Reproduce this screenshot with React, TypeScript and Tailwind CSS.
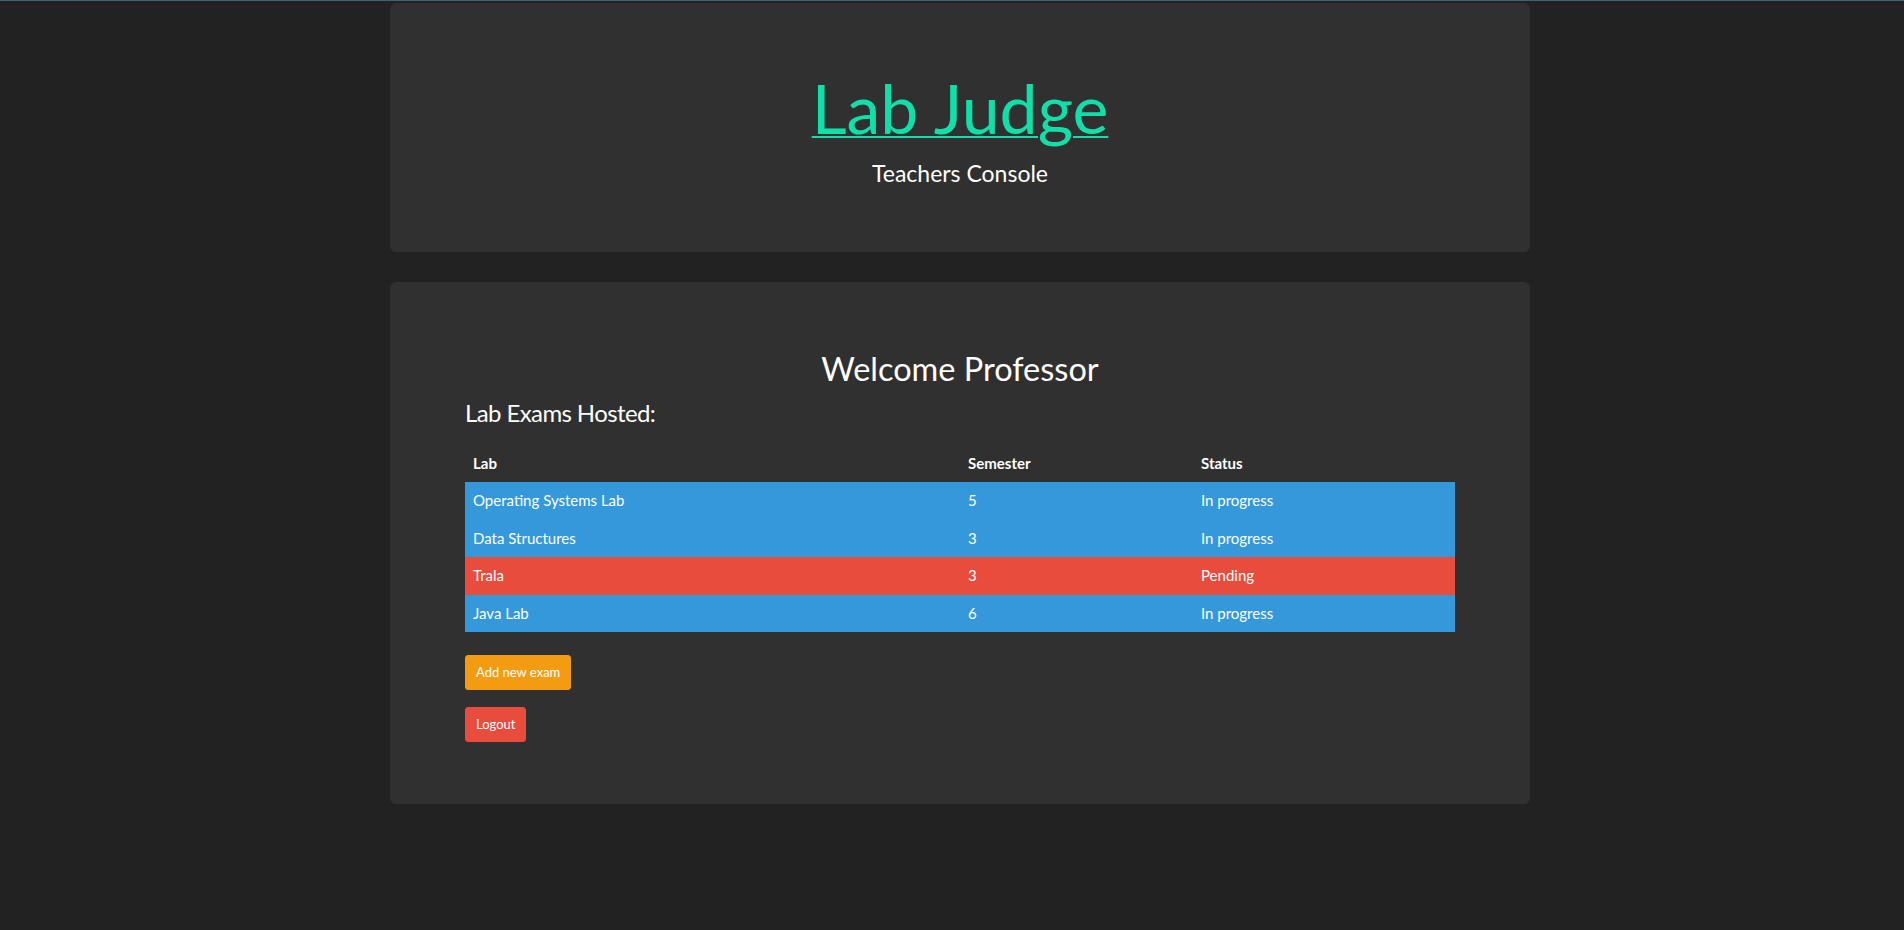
const exams = [
  { lab: "Operating Systems Lab", semester: 5, status: "In progress" },
  { lab: "Data Structures", semester: 3, status: "In progress" },
  { lab: "Trala", semester: 3, status: "Pending" },
  { lab: "Java Lab", semester: 6, status: "In progress" },
]

export default function App() {
  return <div className="min-h-screen bg-[#222222] text-white font-['Lato','Open_Sans',sans-serif]">
    {/* thin strip along the top edge */}
    <div className="h-px bg-[#3f6478]" />
    <div className="pl-4 pt-[2px]">
      <div className="mx-auto w-[1140px]">
        {/* header */}
        <div className="rounded-[6px] bg-[#303030] pt-[47px] pb-[47px] text-center">
          <h1 className="mt-[21px] mb-[11.5px] text-[68px] leading-[1.1] font-normal">
            <a href="#" className="text-[#0fe0a9] underline decoration-[1.5px] underline-offset-[2px]">Lab Judge</a>
          </h1>
          <p className="mb-[15px] text-[23px] leading-[1.428571]">Teachers Console</p>
        </div>

        {/* main */}
        <div className="mt-[30px] rounded-[6px] bg-[#303030] px-[75px] pt-[48px] pb-[62px]">
          <h2 className="mt-[21px] text-center text-[32.5px] leading-[1.1] font-normal">Welcome Professor</h2>
          <h3 className="mt-[12px] text-[24px] leading-[28.6px] tracking-[-0.6px] font-normal">Lab Exams Hosted:</h3>
          <table className="mt-[17.5px] w-full border-collapse text-[15px] leading-[21.5px]">
            <colgroup>
              <col className="w-[495px]" />
              <col className="w-[233px]" />
              <col />
            </colgroup>
            <thead>
              <tr>
                <th className="p-2 text-left font-bold">Lab</th>
                <th className="p-2 text-left font-bold">Semester</th>
                <th className="p-2 text-left font-bold">Status</th>
              </tr>
            </thead>
            <tbody>
              {exams.map(e => <tr key={e.lab} className={e.status === "Pending" ? "bg-[#e74c3c]" : "bg-[#3498db]"}>
                <td className="p-2">{e.lab}</td>
                <td className="p-2">{e.semester}</td>
                <td className="p-2">{e.status}</td>
              </tr>)}
            </tbody>
          </table>
          <div className="mt-[23px] flex flex-col items-start gap-[17px]">
            <button className="h-[35px] rounded-[3px] border border-[#f39c12] bg-[#f39c12] px-[10px] text-[13px] text-white">Add new exam</button>
            <button className="h-[35px] rounded-[3px] border border-[#e74c3c] bg-[#e74c3c] px-[10px] text-[13px] text-white">Logout</button>
          </div>
        </div>
      </div>
    </div>
  </div>
}
